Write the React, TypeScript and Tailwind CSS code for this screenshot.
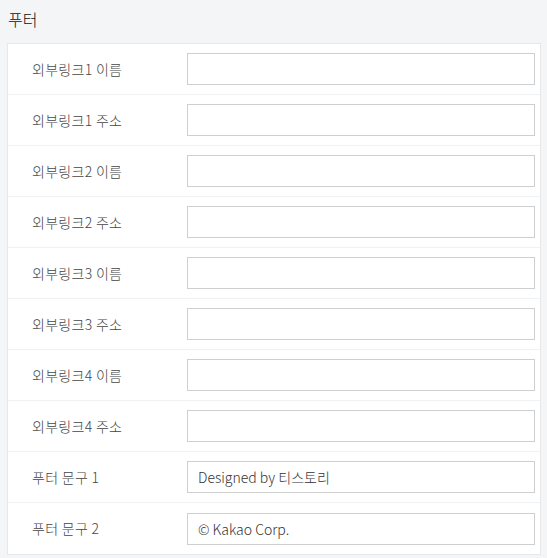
const rows: { label: string; value?: string }[] = [
  { label: "외부링크1 이름" },
  { label: "외부링크1 주소" },
  { label: "외부링크2 이름" },
  { label: "외부링크2 주소" },
  { label: "외부링크3 이름" },
  { label: "외부링크3 주소" },
  { label: "외부링크4 이름" },
  { label: "외부링크4 주소" },
  { label: "푸터 문구 1", value: "Designed by 티스토리" },
  { label: "푸터 문구 2", value: "© Kakao Corp." },
];

export default function App() {
  return (
    <div
      className="min-h-screen bg-[#f3f5f6] pt-[8px] pl-[7px] pr-[6px] font-light"
      style={{ fontFamily: '"Noto Sans CJK KR", "Noto Sans", sans-serif' }}
    >
      {/* Title */}
      <h2 className="h-[35px] pl-[1px] text-[16px] leading-[22px] font-light text-[#111]">푸터</h2>

      {/* Settings card */}
      <div className="border border-[#e6e8ea] bg-white">
        {rows.map((row, i) => (
          <div
            key={row.label}
            className={`flex h-[51px] items-center ${
              i < rows.length - 1 ? "border-b border-[#f0f1f2]" : ""
            }`}
          >
            <div className="w-[179px] shrink-0 pl-[24px] text-[14px] tracking-[0.3px] text-[#444]">
              {row.label}
            </div>
            <input
              defaultValue={row.value}
              className="mr-[5px] h-[32px] w-[348px] border border-[#cfcfcf] bg-white px-[10px] text-[14px] font-light text-[#333] outline-none"
            />
          </div>
        ))}
      </div>
    </div>
  );
}
